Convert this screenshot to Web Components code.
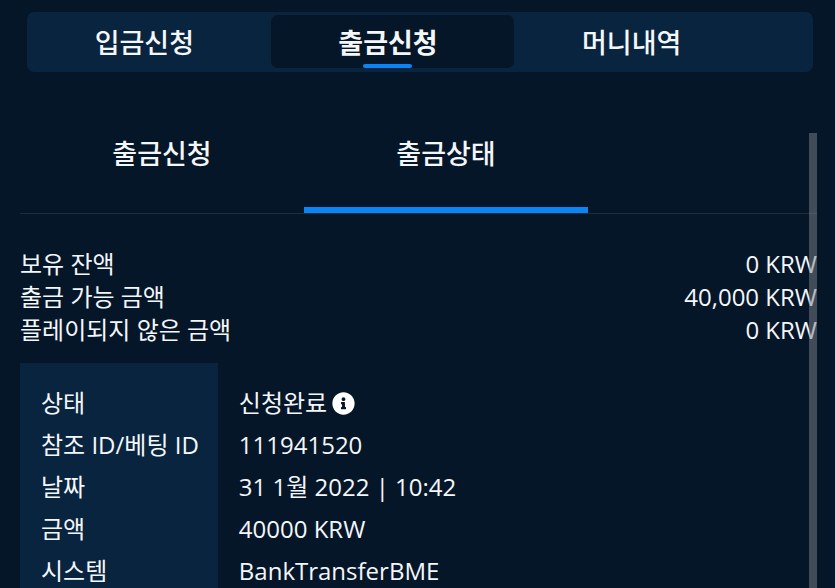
<!DOCTYPE html>
<html lang="ko">
<head>
<meta charset="utf-8">
<meta name="viewport" content="width=device-width, initial-scale=1">
<title>출금신청</title>
<style>
  body {
    margin: 0;
    background: #051628;
    color: #f4f7fa;
    font-family: "Open Sans", "Noto Sans CJK KR", sans-serif;
    font-size: 24px;
    --wallet-panel: #09243e;
    --wallet-bg: #051628;
    --wallet-accent: #0a85f5;
    --wallet-line: #1d2d3e;
  }
</style>
</head>
<body>
<wallet-page>
  <wallet-nav slot="nav">
    <wallet-nav-item>입금신청</wallet-nav-item>
    <wallet-nav-item active>출금신청</wallet-nav-item>
    <wallet-nav-item>머니내역</wallet-nav-item>
  </wallet-nav>
  <wallet-tabs>
    <wallet-tab>출금신청</wallet-tab>
    <wallet-tab active>출금상태</wallet-tab>
  </wallet-tabs>
  <wallet-balance></wallet-balance>
  <withdrawal-details></withdrawal-details>
</wallet-page>

<script>
// Page shell: fixed nav on top, scrolling pane below with an overlay scroll thumb
class WalletPage extends HTMLElement {
  constructor() {
    super();
    this.attachShadow({ mode: 'open' }).innerHTML = `
      <style>
        :host {
          display: flex;
          flex-direction: column;
          height: 100vh;
          overflow: hidden;
        }
        header { padding: 12px 22px 0 27px; }
        main {
          position: relative;
          flex: 1;
          min-height: 0;
          margin: 61px 18px 0 20px;
        }
        .scroll {
          height: 100%;
          overflow-y: auto;
          scrollbar-width: none;
        }
        .thumb {
          position: absolute;
          top: 0;
          right: 0;
          bottom: 0;
          width: 8px;
          background: rgba(128, 130, 138, 0.5);
          pointer-events: none;
        }
      </style>
      <header><slot name="nav"></slot></header>
      <main>
        <div class="scroll"><slot></slot></div>
        <div class="thumb"></div>
      </main>
    `;
  }
}

class WalletNav extends HTMLElement {
  constructor() {
    super();
    this.attachShadow({ mode: 'open' }).innerHTML = `
      <style>
        :host { display: block; }
        nav {
          display: flex;
          padding: 3px 0 4px;
          border-radius: 7px;
          background: var(--wallet-panel);
        }
      </style>
      <nav><slot></slot></nav>
    `;
  }
}

class WalletNavItem extends HTMLElement {
  constructor() {
    super();
    this.attachShadow({ mode: 'open' }).innerHTML = `
      <style>
        :host {
          display: block;
          flex: 0 1 31%;
        }
        button {
          display: flex;
          flex-direction: column;
          align-items: center;
          width: 100%;
          padding: 7px 9px 0 0;
          border: 0;
          border-radius: 7px;
          background: none;
          color: inherit;
          font: inherit;
          font-size: 27px;
          font-weight: 500;
          line-height: 42px;
          cursor: pointer;
        }
        button::after {
          content: "";
          width: 49px;
          height: 4px;
          border-radius: 2px;
        }
        :host([active]) button {
          background: var(--wallet-bg);
          font-weight: 700;
        }
        :host([active]) button::after { background: var(--wallet-accent); }
      </style>
      <button type="button"><slot></slot></button>
    `;
  }
}

class WalletTabs extends HTMLElement {
  constructor() {
    super();
    this.attachShadow({ mode: 'open' }).innerHTML = `
      <style>
        :host {
          display: flex;
          border-bottom: 1px solid var(--wallet-line);
        }
      </style>
      <slot></slot>
    `;
  }
}

class WalletTab extends HTMLElement {
  constructor() {
    super();
    this.attachShadow({ mode: 'open' }).innerHTML = `
      <style>
        :host {
          display: block;
          flex: 0 1 284px;
        }
        button {
          width: 100%;
          padding: 0 0 32px;
          border: 0;
          border-bottom: 6px solid transparent;
          background: none;
          color: inherit;
          font: inherit;
          font-size: 27px;
          font-weight: 500;
          line-height: 42px;
          cursor: pointer;
        }
        :host([active]) button { border-color: var(--wallet-accent); }
      </style>
      <button type="button"><slot></slot></button>
    `;
  }
}

class WalletBalance extends HTMLElement {
  constructor() {
    super();
    this.attachShadow({ mode: 'open' }).innerHTML = `
      <style>
        :host { display: block; }
        dl {
          margin: 33px 0 17px;
          line-height: 33px;
        }
        div {
          display: flex;
          justify-content: space-between;
        }
        dd { margin: 0; }
      </style>
      <dl>
        <div><dt>보유 잔액</dt><dd>0 KRW</dd></div>
        <div><dt>출금 가능 금액</dt><dd>40,000 KRW</dd></div>
        <div><dt>플레이되지 않은 금액</dt><dd>0 KRW</dd></div>
      </dl>
    `;
  }
}

class InfoIcon extends HTMLElement {
  constructor() {
    super();
    this.attachShadow({ mode: 'open' }).innerHTML = `
      <style>
        :host { display: inline-flex; }
        svg {
          width: 23px;
          height: 23px;
          fill: #fff;
        }
      </style>
      <svg viewBox="0 0 512 512" aria-hidden="true">
        <path d="M256 8C119.043 8 8 119.083 8 256c0 136.997 111.043 248 248 248s248-111.003 248-248C504 119.083 392.957 8 256 8zm0 110c23.196 0 42 18.804 42 42s-18.804 42-42 42-42-18.804-42-42 18.804-42 42-42zm56 254c0 6.627-5.373 12-12 12h-88c-6.627 0-12-5.373-12-12v-24c0-6.627 5.373-12 12-12h12v-64h-12c-6.627 0-12-5.373-12-12v-24c0-6.627 5.373-12 12-12h64c6.627 0 12 5.373 12 12v100h12c6.627 0 12 5.373 12 12v24z"/>
      </svg>
    `;
  }
}

class WithdrawalDetails extends HTMLElement {
  constructor() {
    super();
    this.attachShadow({ mode: 'open' }).innerHTML = `
      <style>
        :host { display: block; }
        table {
          width: 100%;
          border-collapse: collapse;
          line-height: 42px;
        }
        th, td {
          padding: 0 19px 0 21px;
          text-align: left;
          font-weight: 400;
          white-space: nowrap;
        }
        th {
          width: 1px;
          background: var(--wallet-panel);
        }
        tr:first-child > * { padding-top: 19px; }
        tr:last-child > * { padding-bottom: 19px; }
        .status {
          display: flex;
          align-items: center;
          gap: 5px;
        }
      </style>
      <table>
        <tr><th scope="row">상태</th><td><div class="status">신청완료<info-icon></info-icon></div></td></tr>
        <tr><th scope="row">참조 ID/베팅 ID</th><td>111941520</td></tr>
        <tr><th scope="row">날짜</th><td>31 1월 2022 | 10:42</td></tr>
        <tr><th scope="row">금액</th><td>40000 KRW</td></tr>
        <tr><th scope="row">시스템</th><td>BankTransferBME</td></tr>
      </table>
    `;
  }
}

customElements.define('wallet-page', WalletPage);
customElements.define('wallet-nav', WalletNav);
customElements.define('wallet-nav-item', WalletNavItem);
customElements.define('wallet-tabs', WalletTabs);
customElements.define('wallet-tab', WalletTab);
customElements.define('wallet-balance', WalletBalance);
customElements.define('info-icon', InfoIcon);
customElements.define('withdrawal-details', WithdrawalDetails);
</script>
</body>
</html>
